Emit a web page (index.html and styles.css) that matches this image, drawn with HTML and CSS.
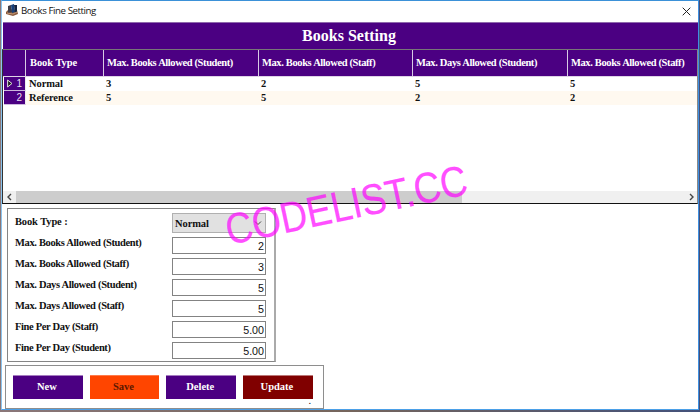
FILE: index.html
```html
<!DOCTYPE html>
<html lang="en">
<head>
<meta charset="utf-8">
<title>Books Fine Setting</title>
<link rel="stylesheet" href="styles.css">
</head>
<body>
<div class="window">
  <header class="titlebar">
    <svg class="app-icon" width="13" height="12" viewBox="0 0 13 12">
      <path d="M0 8l3-3 8 1 1 4-5 2-7-2z" fill="#8a5a3c"/>
      <path d="M2 2l3-1 1 7-4 1z" fill="#3d3b45"/>
      <path d="M5 1l3-1 1 8-3 1z" fill="#173f78"/>
      <path d="M8 1l3 0 0 7-2 1z" fill="#15233f"/>
      <path d="M1 9l6 1 4-2" fill="none" stroke="#c49a78"/>
    </svg>
    <span class="caption">Books Fine Setting</span>
    <svg class="close" width="9" height="9" viewBox="0 0 9 9"><path d="M.7.7l7.6 7.6M8.3.7L.7 8.3" stroke="#222" fill="none"/></svg>
  </header>
  <h1 class="banner"><span>Books Setting</span></h1>
  <section class="grid">
    <div class="row head">
      <div></div><div>Book Type</div><div>Max. Books Allowed (Student)</div><div>Max. Books Allowed (Staff)</div><div>Max. Days Allowed (Student)</div><div>Max. Books Allowed (Staff)</div>
    </div>
    <div class="row">
      <div class="num"><svg width="6" height="9" viewBox="0 0 6 9"><path d="M.6 1v7L5 4.500z" fill="#222" stroke="#ddd"/></svg>1</div><div>Normal</div><div>3</div><div>2</div><div>5</div><div>5</div>
    </div>
    <div class="row alt">
      <div class="num">2</div><div>Reference</div><div>5</div><div>5</div><div>2</div><div>2</div>
    </div>
    <div class="space"></div>
    <div class="scroll">
      <svg width="13" height="12" viewBox="0 0 13 12"><path d="M8 3L5 6l3 3" stroke="#444" stroke-width="1.400" fill="none"/></svg>
      <div class="thumb"></div>
      <svg class="right" width="13" height="12" viewBox="0 0 13 12"><path d="M6 3l3 3-3 3" stroke="#444" stroke-width="1.400" fill="none"/></svg>
    </div>
  </section>
  <section class="form">
    <div class="field first"><label>Book Type :</label><div class="select">Normal<svg width="8" height="5" viewBox="0 0 8 5"><path d="M1 .5l3 3 3-3" stroke="#444" fill="none"/></svg></div></div>
    <div class="field"><label>Max. Books Allowed (Student)</label><div class="input">2</div></div>
    <div class="field"><label>Max. Books Allowed (Staff)</label><div class="input">3</div></div>
    <div class="field"><label>Max. Days Allowed (Student)</label><div class="input">5</div></div>
    <div class="field"><label>Max. Days Allowed (Staff)</label><div class="input">5</div></div>
    <div class="field"><label>Fine Per Day (Staff)</label><div class="input">5.00</div></div>
    <div class="field"><label>Fine Per Day (Student)</label><div class="input">5.00</div></div>
  </section>
  <section class="actions">
    <div class="btn">New</div><div class="btn save">Save</div><div class="btn">Delete</div><div class="btn update">Update</div>
    <span class="dot">.</span>
  </section>
</div>
<svg class="watermark" width="700" height="412" viewBox="0 0 700 412"><text transform="translate(229 245) rotate(-12)" textLength="246" lengthAdjust="spacingAndGlyphs">CODELIST.CC</text></svg>
</body>
</html>
```
FILE: styles.css
```css
* { box-sizing: border-box; }
body {
  margin: 0;
  width: 700px;
  height: 412px;
  overflow: hidden;
  padding: 0 1px 2px 1px;
  background: linear-gradient(90deg, #8a7779, #75655c 50%, #43517a);
  font: bold 10.500px/14px "Liberation Serif", serif;
  color: #111;
}
.window {
  height: 410px;
  background: #fff;
  border: 1px solid #4ba0e8;
  border-left-color: #8ac4ee;
  border-right-color: #3f8fe0;
  border-top-color: #3b91d8;
}
.titlebar {
  height: 21px;
  display: flex;
  align-items: center;
  padding: 0 7px 1px 4px;
}
.app-icon { margin-top: -2px; }
.caption {
  font: 9.700px/14px "Open Sans", sans-serif;
  margin: -1px 0 0 2px;
  letter-spacing: -.44px;
  color: #111;
}
.close { margin-left: auto; }
.banner {
  margin: 0 0 0 1px;
  height: 27px;
  background: #4b0082;
  border-top: 1px solid #8e68ac;
  color: #fff;
  font-size: 16px;
  line-height: 25px;
  text-align: center;
  padding-right: 3px;
}
.grid {
  height: 155px;
  border-top: 1px solid #777;
  border-bottom: 1px solid #111;
  border-right: 1px solid #888;
  border-left: 1px solid #333;
  display: flex;
  flex-direction: column;
}
.row {
  display: grid;
  grid-template-columns: 22px 78px 155px 154px 155px 1fr;
  height: 14px;
  line-height: 14px;
  white-space: nowrap;
  padding-left: 1px;
}
.row > div { padding-left: 2px; overflow: hidden; letter-spacing: -.1px; }
.row > div:nth-child(2) { padding-left: 3px; }
.head {
  height: 27px;
  line-height: 26px;
  color: #fff;
  border-bottom: 1px solid #ded3e6;
  background: #4b0082;
}
.head > div { padding-left: 3px; border-right: 1px solid #d8cae4; letter-spacing: -.4px; word-spacing: .2px; }
.row.head > div { padding-left: 3px; }
.row.head > div:nth-child(2) { padding-left: 4px; letter-spacing: -.1px; }
.head > div:last-child { border-right: 0; }
.alt > div { background: #fff9f0; }
.row > .num {
  display: flex;
  align-items: center;
  justify-content: flex-end;
  gap: 4px;
  padding: 0 3px 0 0;
  border-right: 1px solid #eee;
  border-bottom: 1px solid #ccb8dc;
  background: #4b0082;
  color: #e9dff0;
  font: 10px/13px "Liberation Sans", sans-serif;
}
.space { flex: 1; }
.scroll { height: 12px; display: flex; background: #f0f0f0; }
.thumb { width: 446px; background: #cdcdcd; }
.right { margin-left: auto; }
.form {
  width: 269px;
  height: 154px;
  margin: 4px 0 0 5px;
  border: 1px solid #858585;
  border-right: 2px solid #aaa;
  padding: 4px 8px 0 7px;
}
.field { height: 21px; display: flex; justify-content: space-between; align-items: flex-start; }
.first { height: 24px; }
.field label { margin-top: -1px; letter-spacing: -.38px; word-spacing: .2px; }
.first label { margin-top: 2px; letter-spacing: -.15px; }
.select {
  width: 94px;
  height: 20px;
  border: 1px solid #b0b0b0;
  background: #e1e1e1;
  padding: 0 3px 0 2px;
  line-height: 19px;
  letter-spacing: -.1px;
  display: flex;
  justify-content: space-between;
  align-items: center;
}
.input {
  width: 94px;
  height: 17px;
  border: 1px solid #838383;
  font: 10.700px/17px "Liberation Sans", sans-serif;
  text-align: right;
  padding-right: 1px;
}
.actions {
  width: 319px;
  height: 44px;
  margin: 3px 0 0 3px;
  border: 1px solid #8e8e8e;
  padding: 9px 0 0 7px;
  display: flex;
  gap: 7px;
  align-items: flex-start;
  position: relative;
}
.btn {
  width: 69.700px;
  height: 24px;
  background: #4b0082;
  color: #fff;
  text-align: center;
  line-height: 22px;
  padding-right: 2px;
  border-top: 1px solid #a57cc0;
}
.save { background: #ff4500; color: #5b1800; border-top-color: #ff7b4b; }
.update { background: #800000; border-top-color: #b77; }
.dot { position: absolute; right: 12px; bottom: 0; font-weight: normal; }
.watermark { position: absolute; left: 0; top: 0; }
.watermark text { font: 43px "Liberation Sans", sans-serif; fill: #f0f; fill-opacity: .7; stroke: #f0f; stroke-opacity: .3; stroke-width: .6px; }
```
